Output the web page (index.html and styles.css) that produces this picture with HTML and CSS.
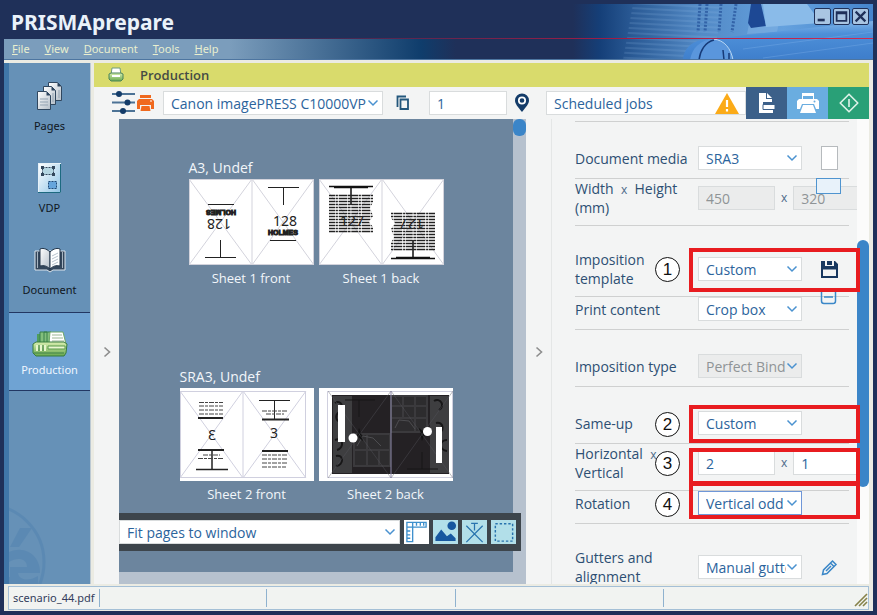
FILE: index.html
```html
<!DOCTYPE html>
<html lang="en">
<head>
<meta charset="utf-8">
<title>PRISMAprepare</title>
<link rel="stylesheet" href="styles.css">
</head>
<body>
<svg class="defs" aria-hidden="true">
  <defs>
    <linearGradient id="paper" x1="0" y1="0" x2="1" y2="1"><stop offset="0" stop-color="#fff"/><stop offset="1" stop-color="#b4bec8"/></linearGradient>
    <linearGradient id="blueprint" x1="0" y1="0" x2="1" y2="1"><stop offset="0" stop-color="#fff"/><stop offset="1" stop-color="#8fc4e6"/></linearGradient>
    <linearGradient id="green" x1="0" y1="0" x2="0" y2="1"><stop offset="0" stop-color="#d9efb0"/><stop offset="1" stop-color="#68a84e"/></linearGradient>
    <linearGradient id="sky" x1="0" x2="1"><stop offset="0" stop-color="#1f3059"/><stop offset=".09" stop-color="#153f78"/><stop offset=".2" stop-color="#2a5a95"/><stop offset=".42" stop-color="#5289c5"/><stop offset=".7" stop-color="#65a1de"/><stop offset="1" stop-color="#4585cd"/></linearGradient>
    <linearGradient id="roll" x1="0" y1="0" x2=".1" y2="1"><stop offset="0" stop-color="#8fc0ee"/><stop offset=".4" stop-color="#4d8fd8"/><stop offset="1" stop-color="#3f7fcc"/></linearGradient>
    <pattern id="lines" width="8" height="5" patternUnits="userSpaceOnUse" patternTransform="rotate(3)"><path d="M0 1h8" stroke="#9cc7ee" stroke-opacity=".3"/></pattern>
    <pattern id="text" width="23" height="12" patternUnits="userSpaceOnUse"><path d="M0 1.5h23M0 4.5h23M0 7.5h23M0 10.5h23" stroke="#222" stroke-width="1.4" stroke-dasharray="5 .6 3 .7 7 .6 2 .8"/></pattern>
    <symbol id="chev" viewBox="0 0 12 8"><path d="M1.5 1.5 6 6l4.5-4.5" fill="none" stroke="currentColor" stroke-width="1.5"/></symbol>
  </defs>
</svg>

<header class="banner">
  <svg class="art" viewBox="0 0 300 56" preserveAspectRatio="none" aria-hidden="true">
    <rect width="300" height="56" fill="url(#sky)"/>
    <path d="M60 0h90L140 56H50z" fill="url(#lines)"/>
    <path d="M180 0h30l-6 28-30 2z" fill="#84b4e3" opacity=".5"/>
    <path d="M127 0l-2 28M134 0l-2 28M148 0l-2 28M163 0l-4 28" stroke="#26549c" stroke-width="3" stroke-dasharray="2 1.5" opacity=".75"/>
    <path d="M178 0h10l5 22-15 2-3-5z" fill="#1d4894"/>
    <path d="M190 0h44l14 19-55 4z" fill="#8abbe9"/>
    <path d="M128 36 300 17v39H110c0-10 8-18 18-20z" fill="url(#roll)"/>
    <path d="M140 35c12 1 18 10 20 21h-43c2-12 10-20 23-21z" fill="#5a96dc"/>
    <path d="M140 35c12 1 18 10 20 21" fill="none" stroke="#b6d6f4"/>
    <path d="M126 56c1-9 6-18 15-20M150 46l1 10M156 49v7" fill="none" stroke="#163a78" stroke-width="1.5"/>
    <path d="M170 45l130-17M190 54l110-15" stroke="#8abaf0" opacity=".3"/>
  </svg>
  <div class="title">
    <h1>PRISMAprepare</h1>
    <div class="winbtns">
      <button aria-label="Minimize"><svg viewBox="0 0 17 17"><path d="M3 12.5h8" stroke="#1f3059" stroke-width="3"/></svg></button>
      <button aria-label="Maximize"><svg viewBox="0 0 17 17"><path d="M3 3.5h11v10H3zM3 5h11" fill="none" stroke="#1f3059" stroke-width="2"/></svg></button>
      <button aria-label="Close"><svg viewBox="0 0 17 17"><path d="M3 3l11 11M14 3 3 14" stroke="#1f3059" stroke-width="2.5"/></svg></button>
    </div>
  </div>
  <nav class="menu">
    <a href="#"><u>F</u>ile</a><a href="#"><u>V</u>iew</a><a href="#"><u>D</u>ocument</a><a href="#"><u>T</u>ools</a><a href="#"><u>H</u>elp</a>
  </nav>
</header>

<div class="frame">
  <div class="work">
    <nav class="side">
      <a href="#"><svg viewBox="0 0 28 30" width="28" height="30">
        <g stroke="#30475f" fill="url(#paper)"><path d="M12.5 1.5h9l4 4v14h-13z"/><path d="M7.5 5.5h8l4 4v14h-12z"/><path d="M1.5 10.5h9l4 4v14h-13z"/></g>
        <path d="M21.5 1.5v4h4zM15.5 5.5v4h4zM10.5 10.5v4h4z" fill="#2c445e"/><path d="M4 18h8M4 21h8M4 24h8M17 12v9M23 9v8" stroke="#93a3b2"/></svg>Pages</a>
      <a href="#"><svg viewBox="0 0 28 30" width="28" height="30">
        <rect x="2.5" y=".5" width="22" height="29" fill="url(#blueprint)" stroke="#e6f1f8"/><path d="M24.5 1v28.500H2" fill="none" stroke="#1d6a80"/>
        <path d="M6.5 4.5h11v7h-11z" fill="#b5d6e2" stroke="#33475c" stroke-dasharray="2 1"/><path d="M5 3h3v3H5zM16 3h3v3h-3zM5 10h3v3H5zM16 10h3v3h-3z" fill="#33475c"/>
        <path d="M12.5 18.5h8v7h-8z" fill="#65a5dc" stroke="#1f4a78" stroke-dasharray="2 1"/></svg>VDP</a>
      <a href="#"><svg viewBox="0 0 32 30" width="32" height="30">
        <path d="M1 6v19h12l3 2 3-2h12V6z" fill="#34475c" stroke="#dbe4ec"/><path d="M3.5 7v16M28.5 7v16" stroke="#a7b5c2"/>
        <path d="M16 7C12 3 8 3 6 4v17c4-1 7 0 10 3z" fill="url(#paper)" stroke="#24364a"/><path d="M16 7c4-4 8-4 10-3v17c-4-1-7 0-10 3z" fill="#fff" stroke="#24364a"/><path d="M18 11l6-3M18 14l6-3M18 17l6-3M18 20l6-3" stroke="#b6c1cb"/></svg>Document</a>
      <a href="#" class="on"><svg viewBox="0 0 36 28" width="36" height="28">
        <path d="M5 4h9v10H5z" fill="#4f9e5c"/><path d="M8 2h7v12H8zM12 2h7v12h-7z" fill="#83bf7c" stroke="#387f4b"/><path d="M18 2h13l3 12H17z" fill="#fff" stroke="#6fa767"/><path d="M20 5h10M20 8h11M20 11h12" stroke="#9bb693"/>
        <path d="M1 14l3-2h28l3 2-1 9-2 3H4l-3-3z" fill="url(#green)" stroke="#397c3f"/><path d="M5 15v6M9 15v6M13 15v6" stroke="#e7f6cc" stroke-width="2"/><path d="M7 15v6M11 15v6" stroke="#3d7f45"/><path d="M16 16h17v3H16z" fill="#eaf6d0" stroke="#5a9b4c"/><path d="M2 23h30" stroke="#3c8046"/></svg>Production</a>
      <svg class="mark" viewBox="0 0 82 82" width="82" height="82" aria-hidden="true"><circle cx="-22" cy="60" r="57" fill="none" stroke="#4c7fae" stroke-width="3"/><path d="M1 45 11 26h12L10 45z" fill="#4c7fae"/><path d="M0 50c18-8 32 6 31 21H9c1 7 10 9 20 3v8H0v-7h1V65h17c0-9-10-10-18-5z" fill="#4c7fae"/></svg>
    </nav>

    <main>
      <h2><svg viewBox="0 0 16 16" width="16" height="16" aria-hidden="true"><path d="M4 1h8l1 7H3z" fill="#fff" stroke="#6f9b7c"/><path d="M1 7l2-1h10l2 1v5l-2 2H3l-2-2z" fill="url(#green)" stroke="#4b8458"/><path d="M4 9h8" stroke="#fff" stroke-width="2"/></svg>Production</h2>

      <div class="tools">
        <div class="left">
          <svg viewBox="0 0 45 28" width="45" height="28" aria-hidden="true"><g stroke="#4c7295" stroke-width="2"><path d="M2 5h23M2 13.5h23M2 22h23"/></g><g fill="#143c69"><circle cx="9" cy="5" r="3"/><circle cx="17.500" cy="13.500" r="3"/><circle cx="13" cy="22" r="3"/></g><path d="M30 6h11v3H30zM29 10h13l2 2v8h-3v-4H30v4h-3v-8z" fill="#f0691e"/><path d="M31.500 17h8l1 5h-10z" fill="#f0691e"/><path d="M40 12h2" stroke="#fff"/></svg>
          <span class="pick printer"><select aria-label="Printer"><option>Canon imagePRESS C10000VP</option></select><svg><use href="#chev"/></svg></span>
          <svg class="copy" viewBox="0 0 14 16" width="14" height="16" aria-hidden="true"><path d="M10 1.500H1.500V12M4.500 4.500h7.500v9.500H4.500z" fill="none" stroke="#23577c" stroke-width="1.800"/></svg>
          <input class="copies" aria-label="Copies" value="1">
          <svg viewBox="0 0 16 20" width="16" height="20" aria-hidden="true"><path d="M8 19C4 14 1 11 1 7.500a7 7 0 0 1 14 0C15 11 12 14 8 19z" fill="#143c69"/><circle cx="8" cy="7.500" r="3.200" fill="none" stroke="#fff" stroke-width="1.700"/></svg>
        </div>
        <div class="jobs">
          <label><input aria-label="Job destination" value="Scheduled jobs" readonly><svg viewBox="0 0 24 21" width="24" height="21" aria-hidden="true"><path d="M12 0 24 21H0z" fill="#fbab18"/><path d="M12 7v7M12 16v2.500" stroke="#fff" stroke-width="2.200"/></svg></label>
          <button class="b1" aria-label="Job ticket"><svg viewBox="0 0 20 22" width="20" height="22"><path d="M2 1h7v6h6v3H6v8h10v3H2z" fill="#fff"/><path d="M10 1l5 5h-5z" fill="#fff"/><path d="M6 12.500h12v5H6z" fill="#fff" stroke="#3c6089"/></svg></button>
          <button class="b2" aria-label="Print"><svg viewBox="0 0 22 22" width="22" height="22"><path d="M5 1h12v6h-1V4H6v3H5zM2 7h18l2 2v8h-3l-2-5H5l-2 5H0V9z" fill="#fff"/><path d="M6 13h10l3 8H3z" fill="#fff"/><circle cx="17.500" cy="9.500" r="1" fill="#6aade0"/></svg></button>
          <button class="b3" aria-label="Start"><svg viewBox="0 0 20 20" width="20" height="20"><path d="M10 1.200 18.800 10 10 18.800 1.200 10zM10 6v8" fill="none" stroke="#dff3ea" stroke-width="1.600" stroke-linejoin="round"/></svg></button>
        </div>
      </div>

      <div class="panes">
        <button class="fold" aria-label="Expand left pane"><svg viewBox="0 0 8 12"><path d="M1.500 1.500 6.500 6l-5 4.500" fill="none" stroke="#8d8d8d" stroke-width="1.600"/></svg></button>
        <section class="preview">
          <div class="canvas">
            <div class="group">
              <h3>A3, Undef</h3>
              <div class="pair">
                <figure><svg viewBox="0 0 125 86" width="125" height="86">
                  <rect width="125" height="86" fill="#fff"/><path d="M0 0l63 86L125 0M0 86 63 0l62 86M63 0v86M.5.5h124v85H.5z" fill="none" stroke="#d3d3dc"/>
                  <g id="half"><path d="M79 8.500h31M94.500 8v18M81 61.500h26" stroke="#222"/><text x="84" y="47" class="num">128</text><text x="94" y="56" class="holmes">HOLMES</text></g>
                  <use href="#half" transform="rotate(180 63 43.500)"/></svg><figcaption>Sheet 1 front</figcaption></figure>
                <figure><svg viewBox="0 0 125 86" width="125" height="86">
                  <rect width="125" height="86" fill="#fff"/><path d="M0 0l63 86L125 0M0 86 63 0l62 86M63 0v86M.5.5h124v85H.5z" fill="none" stroke="#d3d3dc"/>
                  <g id="half2"><path d="M10 15h44v8l-3 6 3 8-4 6 4 5v6H10z" fill="url(#text)"/><path d="M10 7.500h44M15 8.500h34M32 8v18" stroke="#111" stroke-width="1.500"/><text x="21" y="47" class="num">127</text></g>
                  <use href="#half2" transform="rotate(180 63 43.500)"/></svg><figcaption>Sheet 1 back</figcaption></figure>
              </div>
            </div>
            <div class="group two">
              <h3>SRA3, Undef</h3>
              <div class="pair">
                <figure><svg viewBox="0 0 134 93" width="134" height="93">
                  <rect width="134" height="93" fill="#fff"/><path d="M0 3l63 87 63-87M0 90 63 3l63 87M63 3v87M.5 3.500h125v86H.5z" fill="none" stroke="#d0d0df"/>
                  <path d="M79 12.500h31M94.500 12v19" stroke="#222"/><path d="M82 31.500h27M82 63h26" stroke="#222" stroke-width="2"/><path d="M82 23h26M86 26h18M82 67h25M82 71h26M82 75h25M82 79h24" stroke="#444" stroke-dasharray="5 1 3 1"/><text x="90" y="50" class="num">3</text>
                  <path d="M16 81.500h32M32 81V63" stroke="#222" stroke-width="1.500"/><path d="M18 30h25M18 62h26" stroke="#222" stroke-width="2"/><path d="M19 14.500h24M19 18h24M19 22h24M19 26h24M23 67h17M18 70.500h26" stroke="#444" stroke-dasharray="5 1 3 1"/><text x="-36" y="52" class="num" transform="scale(-1 1)">3</text></svg><figcaption>Sheet 2 front</figcaption></figure>
                <figure><svg viewBox="0 0 134 93" width="134" height="93">
                  <rect width="134" height="93" fill="#fff"/><path d="M8.500 3.500h125v86H8.500z" fill="none" stroke="#d0d0df"/><path d="M13 7h117v79H13z" fill="#242124"/>
                  <path d="M14 8h19v77H14zM111 8h19v77h-19z" fill="#3e3e40"/>
                  <g fill="#2d2c2e" stroke="#3b3a3d" stroke-width="2"><path d="M35 46h36v32H35zM72 8h36v36H72zM48 46v32M60 62v16M35 62h36M84 8v22M96 8v36M72 18h36M72 30h36"/></g><path d="M38 58l6-10 10 2 8 8M76 40l4-8 10 1 6 8" fill="none" stroke="#4d4d50"/>
                  <g fill="none" stroke="#171617"><path d="M26 12h30M40 12v17M88 81h31M103 81V64"/><path d="M16 15c6-4 10 5 4 9-4 3-4 9 2 10M16 52c8-4 10 8 2 10M17 68c8-2 8 9 0 10M115 13c6-4 12 5 5 9M117 35c8-2 9 9 1 11M128 52c-8 0-8 10 0 11" stroke-width="2"/></g>
                  <path d="M40 40l3 8 1 5-6-5zM100 40l6 5-3 8z" fill="#111"/><path d="M9 3l63 87 62-87M9 90 72 3l62 87" fill="none" stroke="#585860" opacity=".4"/><path d="M72 3v87" stroke="#8d89aa"/>
                  <path d="M19 17h7v37h-7zM117 39h6v36h-6z" fill="#fff"/><circle cx="34" cy="50" r="4.500" fill="#fff"/><circle cx="108.500" cy="43.500" r="4.500" fill="#fff"/></svg><figcaption>Sheet 2 back</figcaption></figure>
              </div>
            </div>
          </div>
          <div class="vtrack"><span></span></div>
          <div class="zoombar">
            <span class="pick fit"><select aria-label="Zoom"><option>Fit pages to window</option></select><svg><use href="#chev"/></svg></span>
            <button class="white" aria-label="Rulers"><svg viewBox="0 0 25 25"><path d="M2.500 22.500v-20h20v5h-14v15zM8.500 7.500h-6M8.500 2.500v5M12.500 3v3M16.500 3v3M20 3v3M3 11.500h3M3 15.500h3M3 19h3" fill="none" stroke="#3e90cd" stroke-width="1.400"/></svg></button>
            <button aria-label="Images"><svg viewBox="0 0 25 25"><path d="M2 22v-4l6-8 6 7 4-3 5 5v3z" fill="#17579f"/><circle cx="19" cy="6" r="4.500" fill="#17579f"/></svg></button>
            <button aria-label="Trim"><svg viewBox="0 0 25 25"><path d="M9 3.500h7M12.500 3v8M4 6l17 17M21 6 4 23" fill="none" stroke="#2873ae" stroke-width="1.300"/></svg></button>
            <button aria-label="Selection"><svg viewBox="0 0 25 25"><path d="M4 4h18v18H4z" fill="none" stroke="#2873ae" stroke-width="1.500" stroke-dasharray="2.500 2"/></svg></button>
          </div>
        </section>
        <button class="fold" aria-label="Expand right pane"><svg viewBox="0 0 8 12"><path d="M1.500 1.500 6.500 6l-5 4.500" fill="none" stroke="#8d8d8d" stroke-width="1.600"/></svg></button>

        <form class="settings">
          <div class="rows">
            <div class="row start"><label for="media">Document media</label>
              <span class="pick"><select id="media"><option>SRA3</option></select><svg><use href="#chev"/></svg></span>
              <span class="extra"><i class="portrait"></i></span><i class="landscape"></i></div>
            <div class="row"><label for="w">Width &nbsp;<small>x</small>&nbsp; Height<br>(mm)</label>
              <span class="dims"><input id="w" value="450" disabled><small>x</small><input aria-label="Height" value="320" disabled></span></div>
            <div class="row start double"><label for="tpl">Imposition<br>template</label>
              <span class="pick"><select id="tpl"><option>Custom</option></select><svg><use href="#chev"/></svg></span>
              <span class="extra"><svg viewBox="0 0 17 17" width="17" height="17"><path d="M0 0h14l3 3v14H0zM4 0v5h9V0zM2 8.500V15h13V8.500z" fill="#17375f" fill-rule="evenodd"/><path d="M6 0h5v4H6z" fill="#17375f"/></svg></span>
              <svg class="minus" viewBox="0 0 17 15"><path d="M1.500 0v11a2.500 2.500 0 0 0 2.500 2.500h9a2.500 2.500 0 0 0 2.500-2.500V0M4 7h9" fill="none" stroke="#3a87c8" stroke-width="1.500"/></svg>
              <b class="callout">1</b><span class="box tall"></span></div>
            <div class="row"><label for="content">Print content</label>
              <span class="pick"><select id="content"><option>Crop box</option></select><svg><use href="#chev"/></svg></span></div>
            <div class="row start"><label for="type">Imposition type</label>
              <span class="pick"><select id="type" disabled><option>Perfect Binding</option></select><svg><use href="#chev"/></svg></span></div>
            <div class="row start"><label for="same">Same-up</label>
              <span class="pick"><select id="same"><option>Custom</option></select><svg><use href="#chev"/></svg></span>
              <b class="callout">2</b><span class="box low"></span></div>
            <div class="row double"><label for="h">Horizontal &nbsp;<small>x</small><br>Vertical</label>
              <span class="dims"><input id="h" value="2"><small>x</small><input aria-label="Vertical" value="1"></span>
              <b class="callout">3</b><span class="box"></span></div>
            <div class="row"><label for="rot">Rotation</label>
              <span class="pick focus"><select id="rot"><option>Vertical odd</option></select><svg><use href="#chev"/></svg></span>
              <b class="callout">4</b><span class="box"></span></div>
            <div class="row start"><label for="gut">Gutters and<br>alignment</label>
              <span class="pick"><select id="gut"><option>Manual gutters</option></select><svg><use href="#chev"/></svg></span>
              <span class="extra"><svg viewBox="0 0 17 17" width="17" height="17"><path d="M1.500 15.500l1-4.500 9-9 3.500 3.500-9 9zM9.500 4l3.500 3.500M5 12l5-5" fill="none" stroke="#3a87c8" stroke-width="1.500"/></svg></span></div>
          </div>
          <div class="vtrack wide"><span></span></div>
        </form>
      </div>
    </main>
  </div>

  <footer>
    <span class="file">scenario_44.pdf</span><span class="c1"></span><span class="c2"></span><span class="c3"></span><span class="last"><svg viewBox="0 0 14 14" width="14" height="14" aria-hidden="true"><path d="M1 13 13 1M5 13l8-8M9 13l4-4" stroke="#86824a" stroke-width="1.600"/></svg></span>
  </footer>
</div>
</body>
</html>
```
FILE: styles.css
```css
* { box-sizing: border-box; }
body {
  margin: 0;
  height: 100vh;
  padding: 4px;
  display: flex;
  flex-direction: column;
  background: #1f3059;
  color: #2d4f73;
  font: 14px/19px "Open Sans", "Noto Sans", sans-serif;
}
h1, h2, h3, figure { margin: 0; }
button { border: 0; padding: 0; background: none; }
svg { display: block; }
.defs { position: absolute; width: 0; height: 0; }

/* Title and menu */
.banner { position: relative; flex: none; }
.art { position: absolute; right: 0; top: 0; width: 300px; height: 100%; }
.title {
  position: relative;
  display: flex;
  justify-content: space-between;
  height: 35px;
  padding: 4px 4px 0 7px;
}
.title::after {
  content: "";
  position: absolute;
  left: 0;
  right: 0;
  bottom: 0;
  height: 1px;
  background: linear-gradient(90deg, transparent 25%, #a01c45 70%, #cf2a52);
}
h1 { color: #eaf2fa; font: bold 21px/28px "Noto Sans", sans-serif; }
.winbtns { display: flex; gap: 2px; }
.winbtns button { width: 17px; height: 17px; border: 1px solid #1f3059; border-radius: 2px; background: #a9c5e2; }
.winbtns svg { width: 15px; height: 15px; }
.menu {
  position: relative;
  display: flex;
  gap: 15px;
  height: 21px;
  padding-left: 8px;
  background: linear-gradient(90deg, #7b9dbc 26%, #0f3d6c 48%, #1f3059 52%, transparent 65%);
  border-bottom: 1px solid #4d75a0;
}
.menu a { color: #e9efcf; text-decoration: none; font: 11px/20px "Noto Sans", sans-serif; }

/* Window frame */
.frame { flex: 1; min-height: 0; display: flex; flex-direction: column; padding: 3px 4px 1px 0; background: #ebebe3; }
.work { flex: 1; min-height: 0; display: flex; gap: 3px; }

.side {
  position: relative;
  flex: none;
  width: 87px;
  overflow: hidden;
  background: #6691b7;
  border-left: 5px solid #4076a8;
  border-right: 1px solid #bcc9d3;
}
.side a {
  display: flex;
  flex-direction: column;
  align-items: center;
  gap: 5px;
  height: 82px;
  padding-top: 18px;
  color: #10161d;
  font: 11px/19px "Noto Sans", sans-serif;
  text-decoration: none;
}
.side .on { height: 79px; margin-top: 3px; padding-top: 17px; gap: 2px; background: #6fa3d3; color: #eef6ff; border: solid #223763; border-width: 1px 0; }
.mark { position: absolute; left: 0; bottom: 0; opacity: .4; }

main { flex: 1; min-width: 0; display: flex; flex-direction: column; background: #f3f4f4; }
h2 {
  flex: none;
  display: flex;
  align-items: center;
  gap: 16px;
  height: 24px;
  padding-left: 14px;
  background: #d9db6c;
  color: #454b45;
  font: 600 13px/24px "Open Sans", sans-serif;
}

/* Toolbar */
.tools { flex: none; display: flex; justify-content: space-between; height: 32px; }
.left { display: flex; align-items: center; padding-left: 16px; }
.copy { margin: 0 19px 0 13px; }
.printer { width: 220px; margin-left: 8px; }
.copies { width: 78px; margin-right: 7px; }
.jobs { display: flex; width: 323px; }
.jobs label {
  flex: 1;
  min-width: 0;
  display: flex;
  align-items: center;
  align-self: center;
  height: 24px;
  padding-right: 6px;
  background: #fff;
  border: 1px solid #d9dcdd;
}
.jobs label input { flex: 1; min-width: 0; border: 0; height: 22px; }
.jobs button { flex: none; width: 41px; display: grid; place-items: center; }
.b1 { background: #3c6089; }
.b2 { background: #6aade0; }
.b3 { background: #29a077; }

input, select {
  height: 24px;
  margin: 0;
  padding: 0 7px;
  border: 1px solid #d9dcdd;
  border-radius: 0;
  background: #fff;
  color: #2c649c;
  font: inherit;
}
.pick { display: grid; align-items: center; }
.pick > * { grid-area: 1 / 1; }
.pick select { width: 100%; padding-right: 15px; appearance: none; outline: 0; }
.pick > svg { width: 12px; height: 8px; margin-right: 4px; justify-self: end; color: #4a92d0; pointer-events: none; }
input:disabled, select:disabled { background: #ebecec; color: #8f9496; opacity: 1; }
.focus select { border-color: #6f97d8; }

/* Panes */
.panes { flex: 1; min-height: 0; display: flex; }
.fold { flex: none; width: 25px; display: grid; place-items: center; }
.fold svg { width: 8px; height: 12px; }
.preview {
  position: relative;
  flex: 1;
  min-width: 0;
  display: flex;
  padding-bottom: 12px;
  background: #b6c1ce;
}
.canvas {
  flex: 1;
  display: flex;
  flex-direction: column;
  align-items: center;
  padding-top: 38px;
  background: #6c859e;
  color: #f2f6fa;
}
.canvas h3 { font-weight: normal; font-size: 14px; line-height: 22px; }
.two { margin-top: 78px; }
.pair { display: flex; gap: 5px; }
figcaption { margin-top: 4px; text-align: center; font-size: 13px; }
.num { font: 14px "Noto Sans", sans-serif; fill: #222; }
.holmes { font: bold 7px "Liberation Sans", sans-serif; fill: #222; stroke: #222; text-anchor: middle; }
.vtrack { flex: none; width: 13px; background: #b6c1ce; }
.vtrack span { display: block; height: 17px; border-radius: 6px; background: #3b85c8; }
.zoombar {
  position: absolute;
  left: 0;
  right: 5px;
  bottom: 33px;
  display: flex;
  gap: 4px;
  padding: 7px 5px 7px 0;
  background: #3d454c;
}
.fit { flex: 1; }
.zoombar button { width: 25px; height: 24px; background: #b2dfe9; }
.zoombar button svg { width: 25px; height: 24px; }
.zoombar .white { background: #fff; }

/* Settings */
.settings {
  position: relative;
  flex: none;
  width: 318px;
  display: flex;
  overflow: hidden;
  border-left: 1px solid #e4e6e6;
}
.rows { flex: 1; min-width: 0; margin: 2px 8px 0 23px; }
.rows::before { content: ""; display: block; height: 1px; background: #cfd0d0; }
.row {
  position: relative;
  display: grid;
  grid-template-columns: 123px 104px 1fr;
  align-items: center;
  padding-bottom: 8px;
  border-bottom: 1px solid #cfd0d0;
}
.row.start { padding-top: 24px; }
.row small { color: #4c6a88; font-size: 12px; line-height: 12px; }
.dims { display: flex; align-items: center; gap: 5px; }
.dims input { flex: none; width: 77px; }
.dims small { padding: 0 1px; }
.extra { width: 54px; display: grid; place-items: center; }
.portrait { width: 17px; height: 24px; background: #fff; border: 1px solid #b6babd; }
.landscape {
  position: absolute;
  z-index: 1;
  left: 241px;
  bottom: -16px;
  width: 25px;
  height: 16px;
  background: #e8f2fa;
  border: 1px solid #4f94cf;
}
.minus { position: absolute; right: 12px; bottom: -9px; width: 17px; height: 15px; }
.wide { position: relative; width: 12px; padding-top: 121px; background: #fbfbfb; }
.wide span { height: 247px; }

.callout {
  position: absolute;
  z-index: 1;
  left: 80px;
  bottom: 6px;
  width: 25px;
  height: 25px;
  border: 1px solid #111;
  border-radius: 50%;
  background: #fff;
  color: #111;
  font: 17px/23px "Liberation Sans", sans-serif;
  text-align: center;
}
.double .callout { bottom: 14px; }
.box {
  position: absolute;
  z-index: 2;
  left: 114px;
  right: -11px;
  bottom: 4px;
  height: 38px;
  border: 4px solid #e81c20;
  pointer-events: none;
}
.tall { height: 44px; }
.low { bottom: 0; }

/* Status bar */
footer {
  flex: none;
  display: flex;
  align-items: center;
  height: 24px;
  margin: 2px 0 0 4px;
  border: 1px solid #a4bfd6;
  background: #f1f3f1;
  color: #333d5c;
  font: 11px/18px "Noto Sans", sans-serif;
}
footer span { height: 18px; border-right: 1px solid #8fb2cf; }
.file { padding: 0 4px; }
.c1 { flex: 168; }
.c2 { flex: 189; }
.c3 { flex: 209; }
footer .last { flex: 205; border: 0; display: flex; justify-content: flex-end; align-items: flex-end; }
```
